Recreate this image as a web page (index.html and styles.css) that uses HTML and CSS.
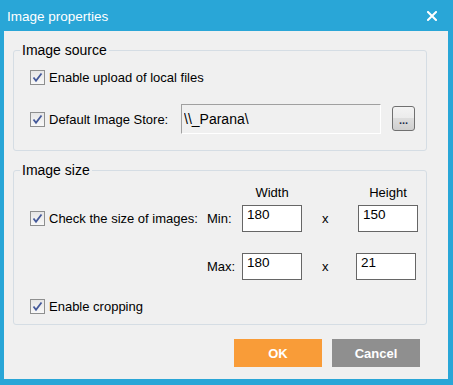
FILE: index.html
```html
<!DOCTYPE html>
<html>
<head>
  <title>Image properties</title>
  <meta charset="utf-8">
  <link rel="stylesheet" href="styles.css">
</head>
<body>

<div class="dialog">

  <div class="titlebar">
    <span>Image properties</span>
    <svg class="close" width="10" height="10" viewBox="0 0 10 10">
      <path d="M1 1 L9 9 M9 1 L1 9" stroke="#fff" stroke-width="2" stroke-linecap="square"/>
    </svg>
  </div>

  <div class="client">

    <fieldset class="group">
      <legend>Image source</legend>
      <div class="group-body">
        <div class="check">
          <span class="box"><svg width="13" height="13" viewBox="0 0 13 13"><path d="M2.5 6.5 L5 9.8 L10.5 2.5" fill="none" stroke="#44599a" stroke-width="1.8"/></svg></span>
          <span>Enable upload of local files</span>
        </div>
        <div class="store-row">
          <div class="check store-label">
            <span class="box"><svg width="13" height="13" viewBox="0 0 13 13"><path d="M2.5 6.5 L5 9.8 L10.5 2.5" fill="none" stroke="#44599a" stroke-width="1.8"/></svg></span>
            <span>Default Image Store:</span>
          </div>
          <input class="path" type="text" value="\\_Parana\" readonly>
          <button class="browse">...</button>
        </div>
      </div>
    </fieldset>

    <fieldset class="group second">
      <legend>Image size</legend>
      <div class="group-body size-body">
        <div class="size-row head">
          <span></span>
          <span></span>
          <span class="col-title">Width</span>
          <span></span>
          <span class="col-title">Height</span>
        </div>
        <div class="size-row">
          <div class="check">
            <span class="box"><svg width="13" height="13" viewBox="0 0 13 13"><path d="M2.5 6.5 L5 9.8 L10.5 2.5" fill="none" stroke="#44599a" stroke-width="1.8"/></svg></span>
            <span>Check the size of images:</span>
          </div>
          <span>Min:</span>
          <input class="num" type="text" value="180" readonly>
          <span class="times">x</span>
          <input class="num" type="text" value="150" readonly>
        </div>
        <div class="size-row max">
          <span></span>
          <span>Max:</span>
          <input class="num" type="text" value="180" readonly>
          <span class="times">x</span>
          <input class="num shift" type="text" value="21" readonly>
        </div>
        <div class="check crop">
          <span class="box"><svg width="13" height="13" viewBox="0 0 13 13"><path d="M2.5 6.5 L5 9.8 L10.5 2.5" fill="none" stroke="#44599a" stroke-width="1.8"/></svg></span>
          <span>Enable cropping</span>
        </div>
      </div>
    </fieldset>

    <div class="actions">
      <button class="btn ok">OK</button>
      <button class="btn cancel">Cancel</button>
    </div>

  </div>

</div>

</body>
</html>
```

FILE: styles.css
```css
body {
    margin: 0;
    font-family: "Liberation Sans", Arial, sans-serif;
    font-size: 13px;
    color: #000;
}

.dialog {
    width: 453px;
    height: 385px;
    box-sizing: border-box;
    background: #29a6d7;
    padding: 0 5px 6px 4px;
    display: flex;
    flex-direction: column;
}

.titlebar {
    height: 30px;
    flex: none;
    display: flex;
    align-items: center;
    justify-content: space-between;
    margin: 0 -5px 0 -4px;
    padding: 1px 16px 0 7px;
    color: #fff;
    font-size: 13.5px;
}

.client {
    flex: 1;
    background: #f0f0f0;
    padding: 11px 21px 0 9px;
}

fieldset.group {
    margin: 0;
    padding: 0;
    border: 1px solid #d5dde4;
    border-radius: 3px;
}

fieldset.second {
    margin-top: 11px;
}

legend {
    margin-left: 6px;
    padding: 0 2px;
    font-size: 14px;
    line-height: 16px;
}

.group-body {
    padding: 9px 0 16px 16px;
}

.check {
    display: flex;
    align-items: center;
    gap: 4px;
    height: 20px;
}

.box {
    width: 15px;
    height: 15px;
    box-sizing: border-box;
    border: 1px solid #8e8f8f;
    background: linear-gradient(#e6e6e6, #f8f8f8);
    display: flex;
    align-items: center;
    justify-content: center;
}

.store-row {
    display: flex;
    align-items: center;
    height: 30px;
    margin-top: 17px;
}

.store-label {
    width: 151px;
}

.path {
    width: 200px;
    height: 30px;
    box-sizing: border-box;
    margin: 0;
    padding: 0 2px;
    border: 1px solid;
    border-color: #a0a0a0 #fff #fff #a0a0a0;
    background: #f0f0f0;
    font-family: inherit;
    font-size: 14px;
    color: #000;
    outline: none;
}

.browse {
    width: 23px;
    height: 25px;
    margin: 0 0 2px 11px;
    padding: 4px 0 0;
    border: 1px solid #707070;
    border-radius: 3px;
    background: linear-gradient(#f3f3f3 0%, #ebebeb 50%, #dddddd 50%, #cfcfcf 100%);
    font-family: inherit;
    font-size: 11px;
    font-weight: bold;
    color: #1c2a4a;
}

.size-body {
    padding: 6px 0 8px 16px;
}

.size-row {
    display: grid;
    grid-template-columns: 177px 35px 60px 56px 60px;
    align-items: center;
    height: 27px;
    margin-top: 5px;
}

.size-row.head {
    height: 16px;
    margin-top: 0;
}

.size-row.max {
    margin-top: 21px;
}

.col-title {
    text-align: center;
}

.times {
    padding-left: 20px;
}

.num {
    width: 60px;
    height: 27px;
    box-sizing: border-box;
    margin: 0;
    padding: 0 4px 8px;
    border: 1px solid #666;
    background: #fff;
    font-family: inherit;
    font-size: 13.5px;
    color: #000;
    outline: none;
}

.num.shift {
    margin-left: -2px;
}

.crop {
    margin-top: 16px;
}

.actions {
    display: flex;
    justify-content: flex-end;
    gap: 10px;
    margin-top: 14px;
    padding-right: 7px;
}

.btn {
    width: 88px;
    height: 28px;
    border: 0;
    color: #fff;
    font-family: inherit;
    font-size: 13px;
    font-weight: bold;
}

.ok {
    background: #f99c38;
}

.cancel {
    background: #8f8f8f;
}
```
